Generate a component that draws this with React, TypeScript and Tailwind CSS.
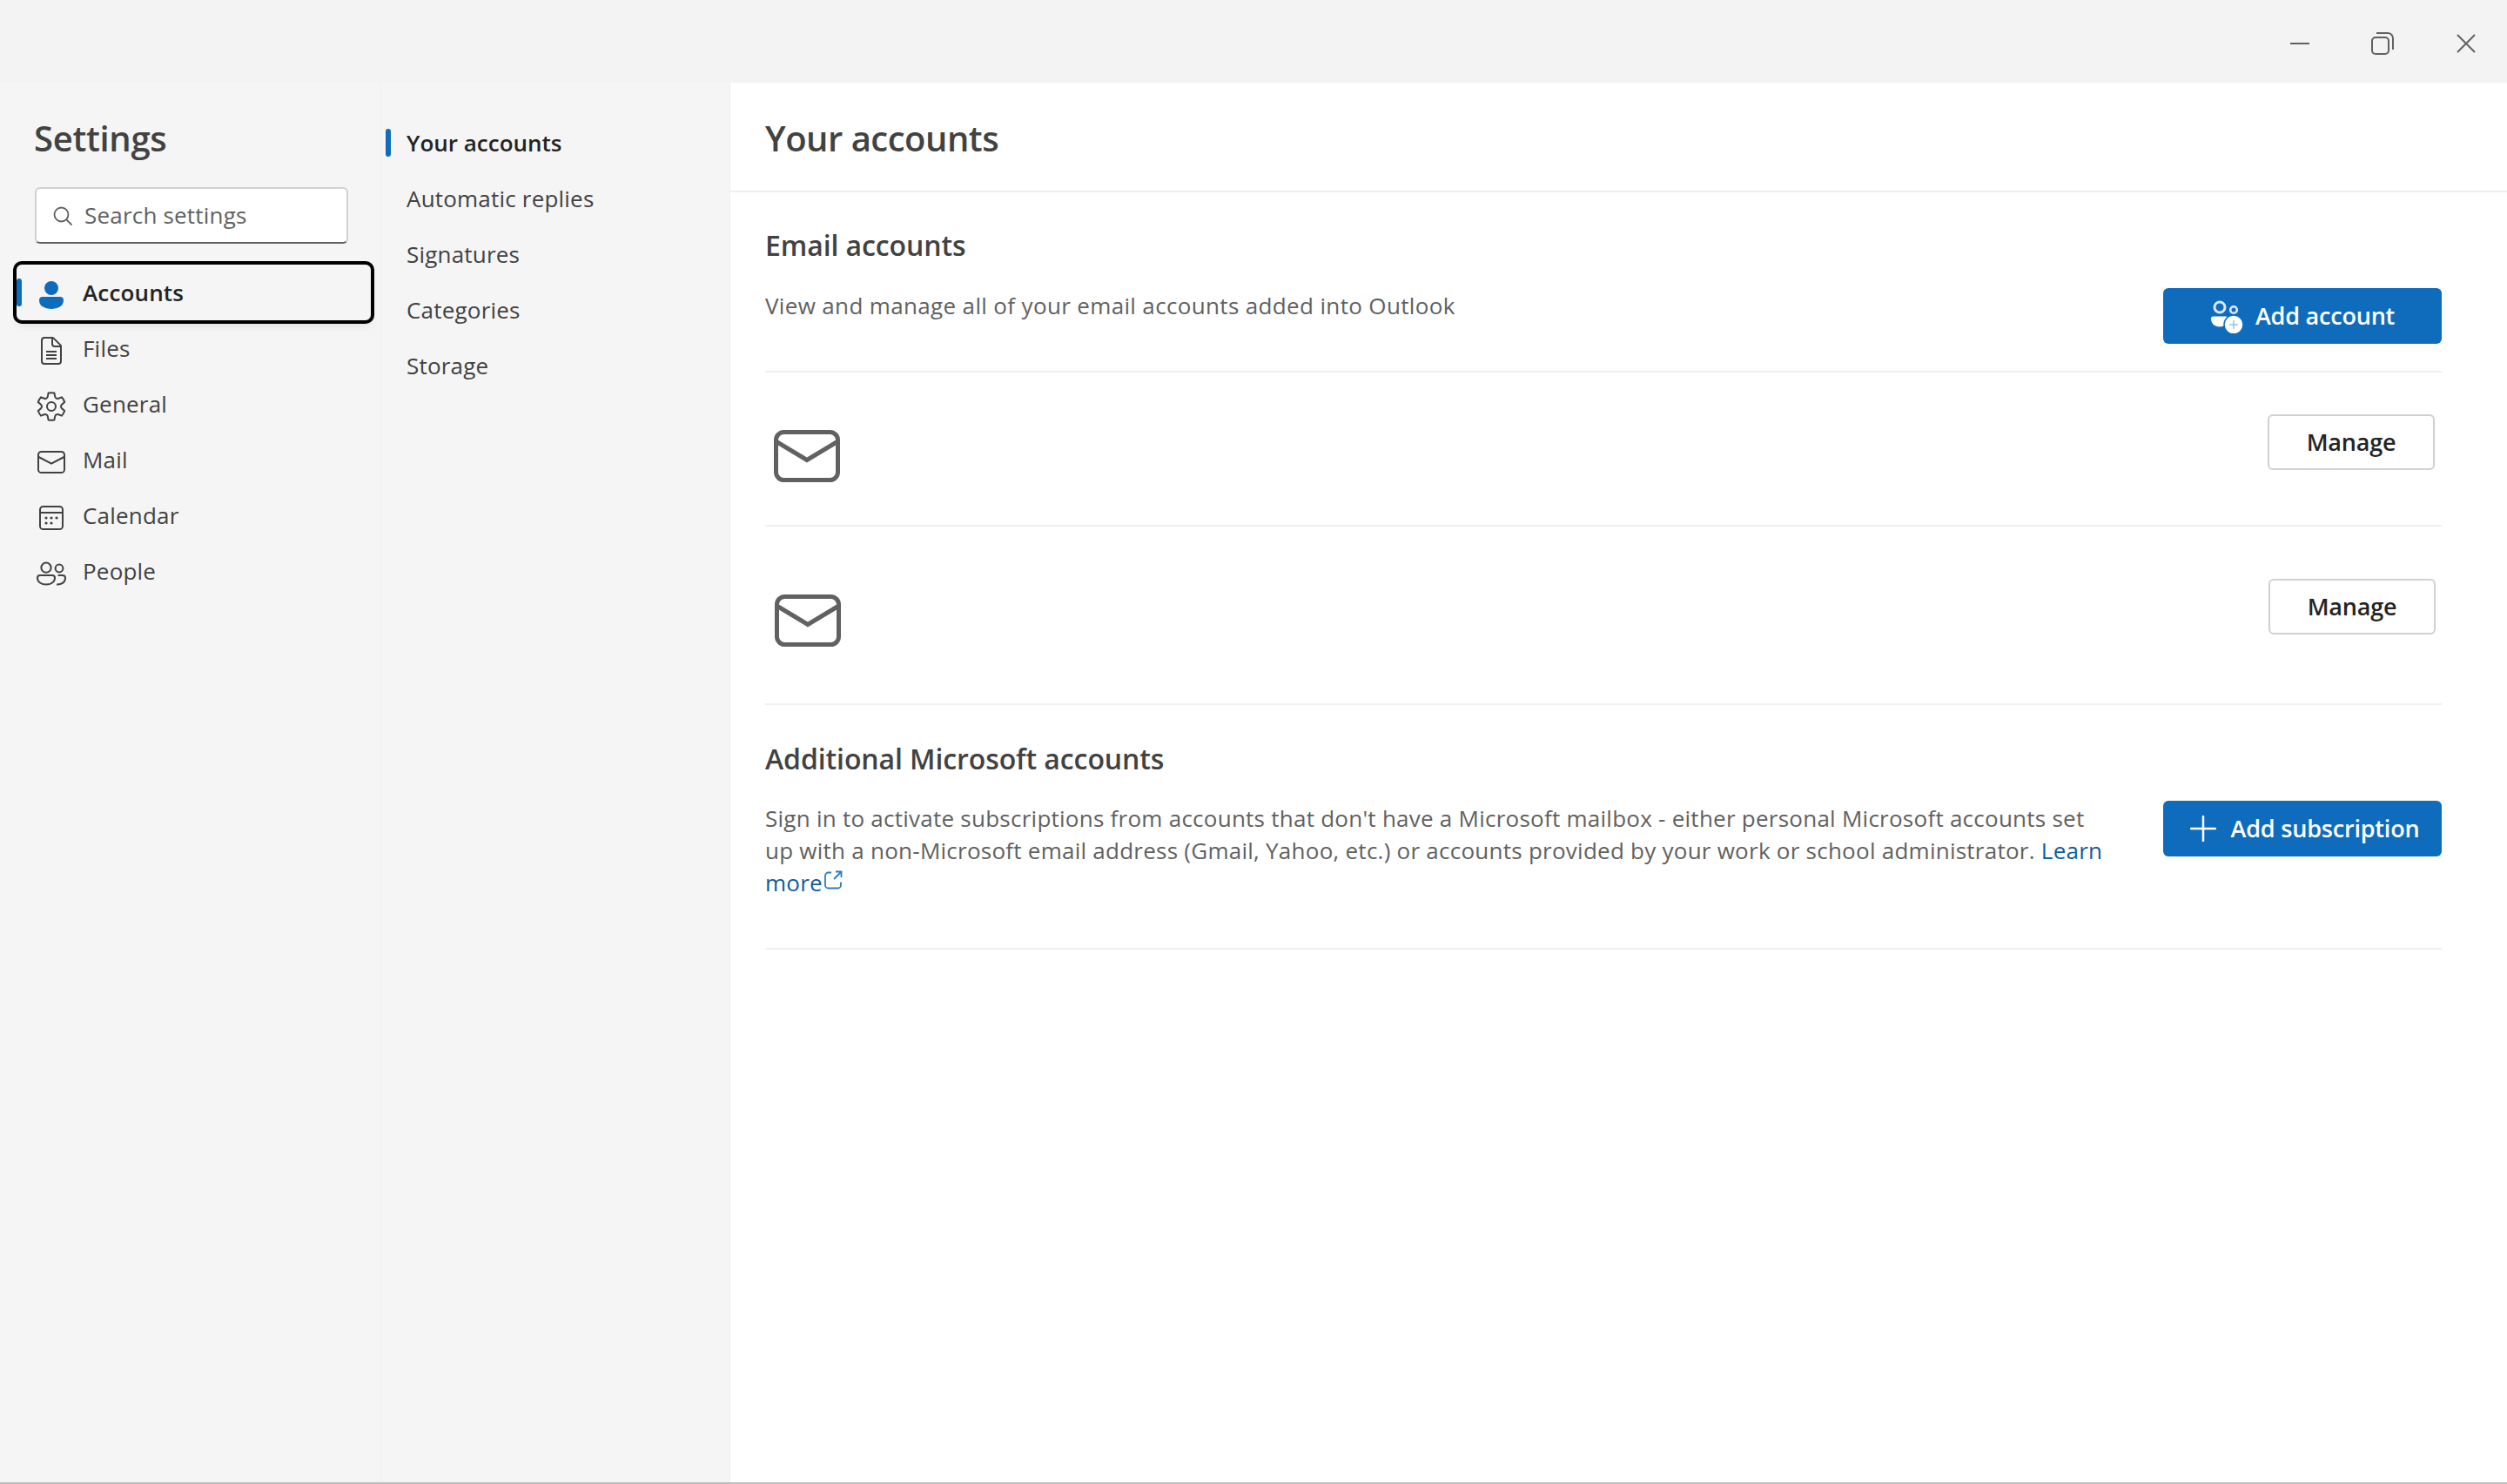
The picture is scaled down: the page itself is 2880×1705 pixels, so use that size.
const NAV = [
  { label: "Accounts", icon: <PersonIcon />, active: true },
  { label: "Files", icon: <FileIcon /> },
  { label: "General", icon: <GearIcon /> },
  { label: "Mail", icon: <MailIcon /> },
  { label: "Calendar", icon: <CalendarIcon /> },
  { label: "People", icon: <PeopleIcon /> },
];

const SUB_NAV = ["Your accounts", "Automatic replies", "Signatures", "Categories", "Storage"];

function PersonIcon() {
  return (
    <svg viewBox="0 0 20 20" className="w-[40px] h-[40px]" fill="#0f6cbd">
      <path d="M10 2a4 4 0 1 0 0 8 4 4 0 0 0 0-8ZM5 11a2 2 0 0 0-2 2c0 1.7.83 2.97 2.13 3.8A9.14 9.14 0 0 0 10 18c1.83 0 3.53-.42 4.87-1.2C16.17 15.97 17 14.7 17 13a2 2 0 0 0-2-2H5Z" />
    </svg>
  );
}

function FileIcon() {
  return (
    <svg viewBox="0 0 20 20" className="w-[40px] h-[40px]" fill="none" stroke="#424242" strokeWidth="1">
      <path d="M6 2.500h4.600c.3 0 .5.1.7.3l3.900 3.900c.2.2.3.4.3.7V16a1.500 1.500 0 0 1-1.500 1.500H6A1.500 1.500 0 0 1 4.500 16V4A1.500 1.500 0 0 1 6 2.500Z" />
      <path d="M10.500 2.800V6a1.500 1.500 0 0 0 1.500 1.500h3.200" />
      <path d="M7 10.500h6M7 12.500h6M7 14.500h6" />
    </svg>
  );
}

function GearIcon() {
  return (
    <svg viewBox="0 0 20 20" className="w-[40px] h-[40px]" fill="none" stroke="#424242" strokeWidth="1">
      <path d="M2.400 7.500A8 8 0 0 1 4 4.700l1.900.7a1.500 1.500 0 0 0 2-1.100l.4-2a8 8 0 0 1 3.400 0l.4 2a1.500 1.500 0 0 0 2 1.100l1.900-.7a8 8 0 0 1 1.600 2.800l-1.500 1.300a1.500 1.500 0 0 0 0 2.400l1.500 1.300a8 8 0 0 1-1.600 2.800l-1.900-.7a1.500 1.500 0 0 0-2 1.100l-.4 2a8 8 0 0 1-3.400 0l-.4-2a1.500 1.500 0 0 0-2-1.100l-1.900.7a8 8 0 0 1-1.600-2.800l1.500-1.300a1.500 1.500 0 0 0 0-2.400L2.400 7.500Z" />
      <circle cx="10" cy="10" r="2.500" />
    </svg>
  );
}

function MailIcon() {
  return (
    <svg viewBox="0 0 20 20" className="w-[40px] h-[40px]" fill="none" stroke="#424242" strokeWidth="1">
      <rect x="2.500" y="4" width="15" height="12" rx="1.800" />
      <path d="M2.700 7 10 10.800 17.300 7" />
    </svg>
  );
}

function CalendarIcon() {
  return (
    <svg viewBox="0 0 20 20" className="w-[40px] h-[40px]" fill="none" stroke="#424242" strokeWidth="1">
      <rect x="3.500" y="3.500" width="13" height="13" rx="1.800" />
      <path d="M3.700 7h12.600" />
      <g fill="#424242" stroke="none">
        <circle cx="7" cy="10" r=".8" />
        <circle cx="10" cy="10" r=".8" />
        <circle cx="13" cy="10" r=".8" />
        <circle cx="7" cy="13" r=".8" />
        <circle cx="10" cy="13" r=".8" />
      </g>
    </svg>
  );
}

function PeopleIcon() {
  return (
    <svg viewBox="0 0 20 20" className="w-[40px] h-[40px]" fill="none" stroke="#424242" strokeWidth="1">
      <circle cx="7" cy="6.600" r="2.800" />
      <circle cx="14.500" cy="7" r="2.200" />
      <path d="M3.500 11h7a1.500 1.500 0 0 1 1.500 1.500c0 2.200-2.200 3.800-5 3.800s-5-1.600-5-3.800A1.500 1.500 0 0 1 3.500 11Z" />
      <path d="M13 16.200c2.600.2 5-1 5-3.600 0-.9-.7-1.600-1.600-1.600H13.800" />
    </svg>
  );
}

function SearchIcon() {
  return (
    <svg viewBox="0 0 24 24" className="w-[24px] h-[24px]" fill="none" stroke="#616161" strokeWidth="1.800">
      <circle cx="10.500" cy="10.500" r="8" />
      <path d="m16.500 16.500 6 6" />
    </svg>
  );
}

function BigMail() {
  return (
    <svg viewBox="0 0 76 60" className="w-[76px] h-[60px]" fill="none" stroke="#616161" strokeWidth="5">
      <rect x="2.500" y="2.500" width="71" height="55" rx="9" />
      <path d="M4 14 38 34.500 72 14" />
    </svg>
  );
}

function AddAccountIcon() {
  return (
    <svg viewBox="0 0 38 40" className="w-[38px] h-[40px]" fill="none">
      <circle cx="11" cy="10" r="6" stroke="#dbe8f5" strokeWidth="3" />
      <circle cx="27" cy="13" r="3.800" stroke="#dbe8f5" strokeWidth="2.600" />
      <path d="M3 20.500h15a2.500 2.500 0 0 1 2.500 2.500c0 6-4 9.500-9.500 9.500S1 29 1 23a2.500 2.500 0 0 1 2-2.500Z" fill="#fff" />
      <circle cx="27" cy="30" r="11" fill="#fff" stroke="#0f6cbd" strokeWidth="1.500" />
      <path d="M27 25v10M22 30h10" stroke="#9cc3e6" strokeWidth="1.500" />
    </svg>
  );
}

function PlusIcon() {
  return (
    <svg viewBox="0 0 30 30" className="w-[30px] h-[30px]" fill="none" stroke="#fff" strokeWidth="2.500" strokeLinecap="round">
      <path d="M15 1v28M1 15h28" />
    </svg>
  );
}

function ExternalIcon() {
  return (
    <svg viewBox="0 0 22 22" className="w-[22px] h-[22px] mb-[12px] ml-[1px]" fill="none" stroke="#2b7cc4" strokeWidth="1.800">
      <path d="M9 2.500H5.500A3.500 3.500 0 0 0 2 6v11a3.500 3.500 0 0 0 3.500 3.500h11A3.500 3.500 0 0 0 20 17v-3.500" />
      <path d="M14 1.500h6.500V8M20.500 1.500 12 10" />
    </svg>
  );
}

export default function App() {
  return (
    <div className="h-screen w-full flex flex-col bg-white text-[#424242] font-['Open_Sans','Liberation_Sans',sans-serif] overflow-hidden">
      <div className="h-[95px] shrink-0 bg-[#f3f3f3] flex justify-end items-center text-[#424242]">
        <div className="flex items-center pt-[4px]">
          <svg viewBox="0 0 24 4" className="w-[24px] h-[4px] mr-[70px]" stroke="#616161" strokeWidth="2">
            <path d="M2 2h22" />
          </svg>
          <svg viewBox="0 0 28 28" className="w-[28px] h-[28px] mr-[71px]" fill="none" stroke="#616161" strokeWidth="2">
            <rect x="2" y="7" width="19" height="19" rx="4" />
            <path d="M7 2h13a6 6 0 0 1 6 6v13" />
          </svg>
          <svg viewBox="0 0 22 22" className="w-[22px] h-[22px] mr-[36px]" fill="none" stroke="#616161" strokeWidth="2">
            <path d="m1 1 20 20M21 1 1 21" />
          </svg>
        </div>
      </div>

      <div className="flex-1 flex min-h-0 border-b-2 border-[#bdbdbd]">
        <div className="w-[437px] shrink-0 bg-[#f5f5f5] flex flex-col">
          <div className="h-[64px] mt-[32px] ml-[39px] text-[40px] leading-[64px] font-semibold tracking-[-0.3px]">Settings</div>
          <div className="mt-[24px] ml-[40px] w-[360px] h-[65px] flex items-center bg-white rounded-[6px] border-2 border-[#d1d1d1] border-b-[#616161] pl-[18px]">
            <SearchIcon />
            <span className="ml-[13px] text-[26px] text-[#616161] tracking-[0.2px]">Search settings</span>
          </div>
          <div className="mt-[24px] flex flex-col">
            {NAV.map((item) => (
              <div
                key={item.label}
                className={
                  item.active
                    ? "h-[64px] ml-[19px] w-[407px] flex items-center rounded-[6px] outline-[4px] outline-black shadow-[0_6px_10px_rgba(0,0,0,0.08)]"
                    : "h-[64px] ml-[19px] w-[407px] flex items-center"
                }
              >
                <span className={item.active ? "w-[6px] h-[32px] rounded-[3px] bg-[#0f6cbd]" : "w-[6px] h-[32px]"} />
                <span className="ml-[14px] mt-[5px]">{item.icon}</span>
                <span
                  className={
                    item.active
                      ? "ml-[16px] text-[26px] font-semibold text-[#242424] tracking-[0.15px]"
                      : "ml-[16px] text-[26px] tracking-[0.2px]"
                  }
                >
                  {item.label}
                </span>
              </div>
            ))}
          </div>
        </div>

        <div className="w-[402px] shrink-0 bg-[#f5f5f5] border-x border-[#f0f0f0] pt-[37px] pl-[5px] flex flex-col">
          {SUB_NAV.map((label, i) => (
            <div key={label} className="h-[64px] flex items-center">
              <span className={i === 0 ? "w-[6px] h-[32px] rounded-[3px] bg-[#0f6cbd]" : "w-[6px] h-[32px]"} />
              <span
                className={
                  i === 0
                    ? "ml-[18px] text-[26px] font-semibold text-[#242424] tracking-[0px]"
                    : "ml-[18px] text-[26px] tracking-[0.2px]"
                }
              >
                {label}
              </span>
            </div>
          ))}
        </div>

        <div className="flex-1 min-w-0 bg-white">
          <div className="h-[126px] pl-[40px] pt-[4px] border-b-2 border-[#f0f0f0] flex items-center">
            <h1 className="text-[40px] font-semibold tracking-[-0.5px]">Your accounts</h1>
          </div>

          <div className="pl-[40px] pr-[75px]">
            <h2 className="pt-[42px] text-[32px] leading-[37px] font-semibold tracking-[-0.1px]">Email accounts</h2>
            <div className="mt-[31px] pb-[31px] flex justify-between items-start border-b-2 border-[#f0f0f0]">
              <p className="pt-[2px] text-[26px] leading-[37px] text-[#616161] tracking-[0.35px]">
                View and manage all of your email accounts added into Outlook
              </p>
              <button className="w-[320px] h-[64px] rounded-[6px] bg-[#0f6cbd] text-white text-[27px] font-semibold tracking-[-0.2px] flex items-center justify-center gap-[14px]">
                <AddAccountIcon />
                Add account
              </button>
            </div>

            <div className="h-[177px] flex justify-between border-b-2 border-[#f0f0f0] pl-[10px] pr-[8px]">
              <div className="pt-[66px]">
                <BigMail />
              </div>
              <div className="pt-[48px]">
                <button className="w-[192px] h-[64px] rounded-[6px] border-2 border-[#d1d1d1] bg-white text-[#242424] text-[27px] font-semibold tracking-[-0.2px]">
                  Manage
                </button>
              </div>
            </div>

            <div className="h-[205px] flex justify-between border-b-2 border-[#f0f0f0] pl-[11px] pr-[7px]">
              <div className="pt-[78px]">
                <BigMail />
              </div>
              <div className="pt-[60px]">
                <button className="w-[192px] h-[64px] rounded-[6px] border-2 border-[#d1d1d1] bg-white text-[#242424] text-[27px] font-semibold tracking-[-0.2px]">
                  Manage
                </button>
              </div>
            </div>

            <h2 className="pt-[43px] text-[32px] leading-[37px] font-semibold tracking-[-0.1px]">Additional Microsoft accounts</h2>
            <div className="mt-[30px] pb-[55px] flex justify-between items-start border-b-2 border-[#f0f0f0]">
              <p className="w-[1545px] pt-[2px] text-[26px] leading-[37px] text-[#616161] tracking-[0.25px]">
                Sign in to activate subscriptions from accounts that don't have a Microsoft mailbox - either personal Microsoft accounts set up with a non-Microsoft email address (Gmail, Yahoo, etc.) or accounts provided by your work or school administrator.{" "}
                <a className="text-[#0f5ca3]">
                  Learn more
                  <span className="inline-flex align-middle">
                    <ExternalIcon />
                  </span>
                </a>
              </p>
              <button className="w-[320px] h-[64px] pl-[5px] rounded-[6px] bg-[#0f6cbd] text-white text-[27px] font-semibold tracking-[-0.2px] flex items-center justify-center gap-[17px]">
                <PlusIcon />
                Add subscription
              </button>
            </div>
          </div>
        </div>
      </div>
    </div>
  );
}
